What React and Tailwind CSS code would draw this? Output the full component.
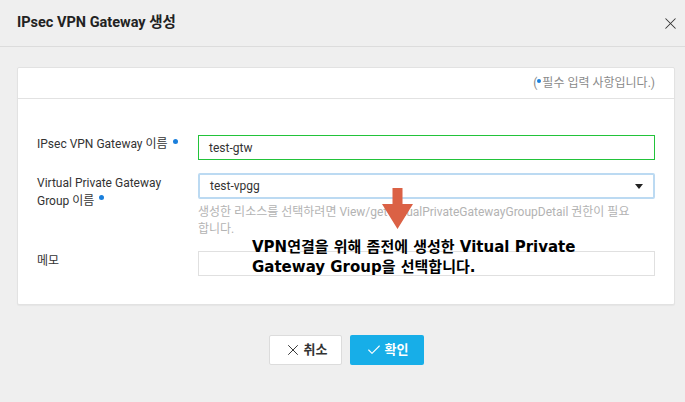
import { Check, X } from "lucide-react";

function Required() {
  return <span className="inline-block w-[5px] h-[5px] rounded-full bg-[#1a7fdc] align-top mt-[3px] ml-[5px]" />;
}

export default function App() {
  return (
    <div className="w-[685px] h-[402px] bg-[#efefef] relative overflow-hidden font-['Roboto','Noto_Sans_CJK_KR',sans-serif] text-[#333]">

      {/* Header */}
      <div className="h-[47px] flex items-center justify-between pl-[17px] pr-[5px] border-b border-[#dcdcdc]">
        <h1 className="text-[14.5px] font-bold text-[#222]">IPsec VPN Gateway 생성</h1>
        <button className="w-[20px] h-[20px] flex items-center justify-center text-[#333]">
          <X size={19} strokeWidth={1.3} />
        </button>
      </div>

      {/* Card */}
      <div className="ml-[17px] mr-[10px] mt-[20px] h-[238px] bg-white border border-[#e2e2e2] rounded-[2px] shadow-[0_1px_1px_rgba(0,0,0,0.04)]">
        <div className="h-[31px] flex items-center justify-end pr-[19px] border-b border-[#e2e2e2] text-[12px] text-[#8a8a8a]">
          (<span className="inline-block w-[4px] h-[4px] rounded-full bg-[#1a7fdc] mr-[1px] -translate-y-[2px]" />필수 입력 사항입니다.)
        </div>

        <div className="pl-[19px] pr-[19px] pt-[36px] flex flex-col">
          {/* Row 1 */}
          <div className="flex">
            <div className="w-[161px] text-[12px] leading-[17px] pt-[1px]">
              IPsec VPN Gateway 이름<Required />
            </div>
            <div className="flex-1 h-[25px] border border-[#22c33a] flex items-center px-[10px] text-[12px] text-[#333]">
              test-gtw
            </div>
          </div>

          {/* Row 2 */}
          <div className="flex mt-[13px]">
            <div className="w-[161px] text-[12px] leading-[18px] pt-[1px]">
              Virtual Private Gateway<br />Group 이름<Required />
            </div>
            <div className="flex-1 flex flex-col">
              <div className="h-[26px] border-2 border-[#bcdaf2] rounded-[2px] flex items-center justify-between pl-[10px] pr-[10px] text-[12px] text-[#333]">
                <span>test-vpgg</span>
                <span className="w-0 h-0 border-l-[4px] border-r-[4px] border-t-[5px] border-l-transparent border-r-transparent border-t-[#222]" />
              </div>
              <p className="mt-[5px] text-[12px] leading-[17px] text-[#b3b3b3] pr-[6px]">
                생성한 리소스를 선택하려면 View/getVirtualPrivateGatewayGroupDetail 권한이 필요<br />합니다.
              </p>
            </div>
          </div>

          {/* Row 3 */}
          <div className="flex mt-[13px]">
            <div className="w-[161px] text-[12px] leading-[17px] pt-[2px]">메모</div>
            <div className="flex-1 h-[25px] border border-[#e0e0e0]" />
          </div>
        </div>
      </div>

      {/* Buttons */}
      <div className="mt-[30px] flex justify-center gap-[8px] pl-[8px]">
        <button className="w-[73px] h-[30px] bg-white border border-[#dcdcdc] rounded-[2px] flex items-center justify-center gap-[2px] text-[13px] font-bold text-[#333]">
          <X size={18} strokeWidth={1.3} />
          취소
        </button>
        <button className="w-[74px] h-[30px] bg-[#17aee8] rounded-[2px] flex items-center justify-center gap-[3px] text-[13px] font-bold text-white">
          <Check size={16} strokeWidth={1.6} />
          확인
        </button>
      </div>

      {/* Annotation arrow */}
      <svg className="absolute left-[382px] top-[188px]" width="31" height="41" viewBox="0 0 31 41">
        <path d="M10.5 0 H20.5 V16 H31 L15.5 41 L0 16 H10.5 Z" fill="#db6145" />
      </svg>

      {/* Annotation text */}
      <div className="absolute left-[252px] top-[237px] text-[15px] leading-[20px] font-bold text-black font-['DejaVu_Sans','Noto_Sans_CJK_KR',sans-serif]">
        VPN연결을 위해 좀전에 생성한 Vitual Private<br />
        Gateway Group을 선택합니다.
      </div>
    </div>
  );
}
